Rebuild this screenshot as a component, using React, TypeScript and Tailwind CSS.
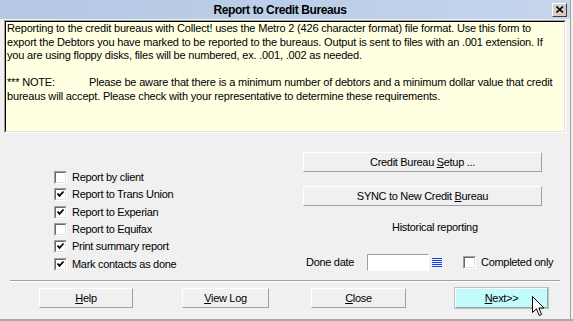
import type { ReactNode } from 'react';

const FONT = "font-['Liberation_Sans',Arial,sans-serif]";

function Check({ checked }: { checked?: boolean }) {
  return (
    <span className="flex h-[13px] w-[13px] shrink-0 border border-t-[#a0a0a0] border-l-[#a0a0a0] border-b-white border-r-white">
      <span className="flex h-full w-full items-center justify-center border border-t-[#696969] border-l-[#696969] border-b-[#e3e3e3] border-r-[#e3e3e3] bg-white">
        {checked && (
          <svg width="9" height="9" viewBox="0 0 9 9">
            <path d="M1.5 3.5 L3.5 5.8 L7.5 1.5" fill="none" stroke="#000" strokeWidth="1.8" />
          </svg>
        )}
      </span>
    </span>
  );
}

function CheckRow({ label, checked }: { label: string; checked?: boolean }) {
  return (
    <div className="flex h-[17.33px] items-start gap-[5px]">
      <Check checked={checked} />
      <span className="-mt-[1px] whitespace-nowrap leading-[15px]">{label}</span>
    </div>
  );
}

function Btn({ children, w, cyan }: { children: ReactNode; w: string; cyan?: boolean }) {
  return (
    <div
      className={`flex h-[20px] items-center justify-center border border-t-white border-l-white border-b-[#a0a0a0] border-r-[#a0a0a0] ${w} ${
        cyan ? 'bg-[#c2fbfb] outline outline-1 outline-[#b5c6c6]' : 'bg-[#f0f0f0]'
      }`}
    >
      {children}
    </div>
  );
}

export default function App() {
  return (
    <div className={`relative h-[321px] w-[573px] overflow-hidden bg-[#f0f0f0] text-[11px] tracking-[-0.3px] text-black ${FONT}`}>
      <div className="h-[319px] w-[571px] border-r border-r-[#a0a0a0]">
        {/* ── Title bar ── */}
        <div className="flex h-[19px] items-center bg-gradient-to-r from-[#b4c8e4] to-[#c4d5ec]">
          <div className="flex-1 pl-[8px] text-center text-[12px] font-bold tracking-[-0.4px]">
            Report to Credit Bureaus
          </div>
          <div className="mr-[3px] flex h-[14px] w-[15px] items-center justify-center border border-t-white border-l-white border-b-[#404040] border-r-[#404040] bg-[#d4d0c8]">
            <svg width="8" height="7" viewBox="0 0 8 7">
              <path d="M0.5 0.5 L7 6.5 M7 0.5 L0.5 6.5" stroke="#000" strokeWidth="1.6" />
            </svg>
          </div>
        </div>

        {/* ── Memo ── */}
        <div className="ml-[4px] mt-[1px] h-[113px] w-[562px] border border-t-[#a0a0a0] border-l-[#a0a0a0] border-b-white border-r-white">
          <div className="h-full w-full whitespace-nowrap border border-t-black border-l-black border-b-[#e3e3e3] border-r-[#e3e3e3] bg-[#ffffe1] pl-[1px] leading-[13.5px] tracking-[-0.18px]">
            <p>
              Reporting to the credit bureaus with Collect! uses the Metro 2 (426 character format) file format. Use this form to
              <br />
              export the Debtors you have marked to be reported to the bureaus. Output is sent to files with an .001 extension. If
              <br />
              you are using floppy disks, files will be numbered, ex. .001, .002 as needed.
            </p>
            <p className="mt-[13.5px] flex">
              <span className="w-[82px] shrink-0">*** NOTE:</span>
              <span>Please be aware that there is a minimum number of debtors and a minimum dollar value that credit</span>
            </p>
            <p>bureaus will accept. Please check with your representative to determine these requirements.</p>
          </div>
        </div>

        {/* ── Options ── */}
        <div className="flex h-[147px]">
          <div className="ml-[54px] mt-[38px] w-[249px]">
            <CheckRow label="Report by client" />
            <CheckRow label="Report to Trans Union" checked />
            <CheckRow label="Report to Experian" checked />
            <CheckRow label="Report to Equifax" />
            <CheckRow label="Print summary report" checked />
            <CheckRow label="Mark contacts as done" checked />
          </div>
          <div className="mt-[19px] flex w-[262px] flex-col">
            <Btn w="w-[239px]">
              <span>
                Credit Bureau <u>S</u>etup ...
              </span>
            </Btn>
            <div className="mt-[14px]">
              <Btn w="w-[239px]">
                <span>
                  SYNC to New Credit <u>B</u>ureau
                </span>
              </Btn>
            </div>
            <div className="mt-[14px] pl-[89px] leading-[14px]">Historical reporting</div>
            <div className="mt-[20px] flex items-center">
              <span className="w-[64px] pl-[3px]">Done date</span>
              <div className="h-[17px] w-[62px] border border-t-[#a0a0a0] border-l-[#a0a0a0] border-b-white border-r-white bg-white" />
              <div className="flex h-[16px] w-[16px] items-center justify-center bg-[#f0f0f0]">
                <svg width="10" height="11" viewBox="0 0 10 11">
                  <path d="M0 1.5 H10 M0 3.5 H10 M0 5.5 H10 M0 7.5 H10 M0 9.5 H10" stroke="#1a3cf0" strokeWidth="1" />
                </svg>
              </div>
              <div className="ml-[18px] flex items-center gap-[5px]">
                <Check />
                <span className="whitespace-nowrap">Completed only</span>
              </div>
            </div>
          </div>
        </div>

        {/* ── Separator ── */}
        <div className="ml-[10px] w-[550px] border-t border-t-[#a0a0a0] border-b border-b-white" />

        {/* ── Buttons ── */}
        <div className="mt-[6px] flex items-start">
          <div className="ml-[39px]">
            <Btn w="w-[94px]">
              <span>
                <u>H</u>elp
              </span>
            </Btn>
          </div>
          <div className="ml-[49px]">
            <Btn w="w-[87px]">
              <span>
                <u>V</u>iew Log
              </span>
            </Btn>
          </div>
          <div className="ml-[42px]">
            <Btn w="w-[95px]">
              <span>
                <u>C</u>lose
              </span>
            </Btn>
          </div>
          <div className="ml-[49px]">
            <Btn w="w-[93px]" cyan>
              <span>
                <u>N</u>ext&gt;&gt;
              </span>
            </Btn>
          </div>
        </div>
      </div>
      <div className="h-[2px] w-full bg-[#a9a9a9]" />

      {/* mouse pointer over Next */}
      <svg className="absolute left-[532px] top-[296px]" width="13" height="21" viewBox="0 0 13 21">
        <path
          d="M0.5 0.5 V16.5 L4.5 12.8 L7.2 19.5 L9.5 18.5 L6.9 12 H12 Z"
          fill="#fff"
          stroke="#000"
          strokeWidth="1"
          strokeLinejoin="miter"
        />
      </svg>
    </div>
  );
}
